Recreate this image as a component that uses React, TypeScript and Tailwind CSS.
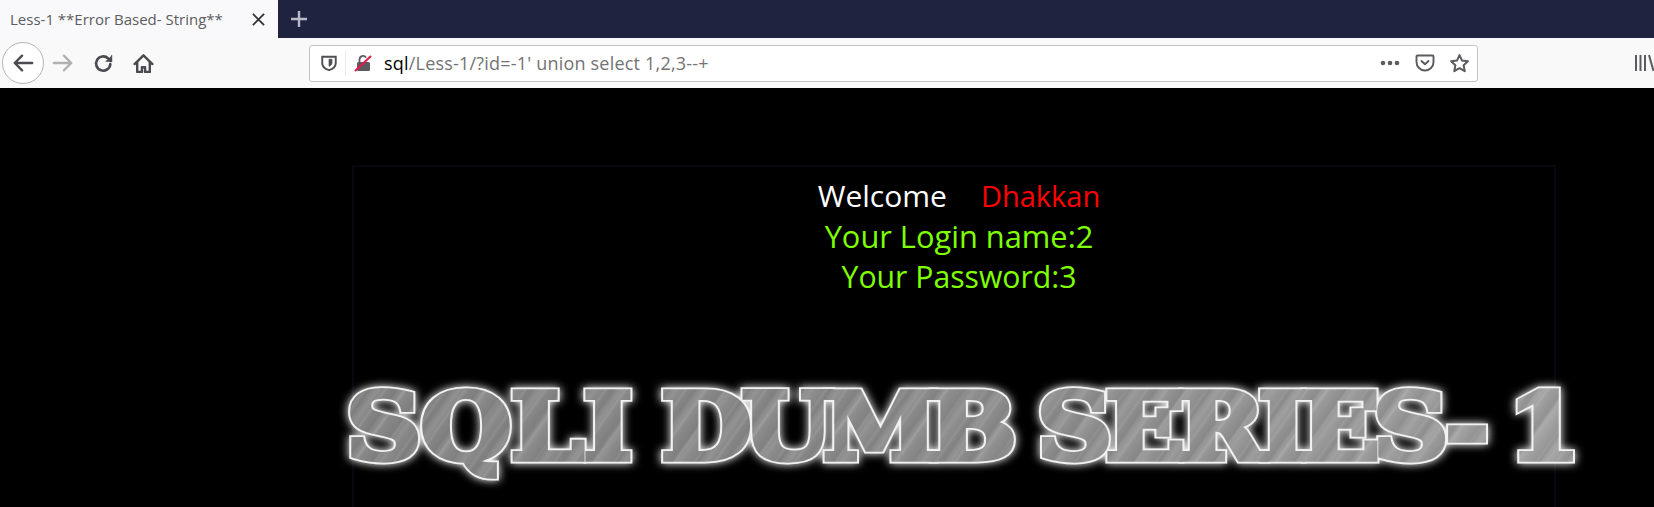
function BackIcon({ className }: { className: string }) {
  return (
    <svg viewBox="0 0 24 24" className={className} fill="none" stroke="currentColor" strokeWidth="2.6" strokeLinecap="round" strokeLinejoin="round">
      <path d="M22 12H3M11 4l-8 8 8 8" />
    </svg>
  );
}

function ToolbarLeft() {
  return (
    <div className="flex items-center w-[309px] shrink-0 h-full relative">
      <div className="w-[42px] h-[42px] ml-[2px] rounded-full bg-white border border-[#b5b5b5] flex items-center justify-center text-[#4a4a4f]">
        <BackIcon className="w-[22px] h-[22px]" />
      </div>
      <div className="ml-[8px] text-[#b1b1b3]">
        <BackIcon className="w-[22px] h-[22px] rotate-180" />
      </div>
      <svg viewBox="0 0 20 20" className="ml-[19px] w-[21px] h-[21px] text-[#4a4a4f]" fill="none" stroke="currentColor" strokeWidth="2.5" strokeLinecap="round" strokeLinejoin="round">
        <path d="M16.5 10.5a6.8 6.8 0 1 1-2-5.3L17 7.5" />
        <path d="M17.8 2.4v5.4h-5.4" fill="currentColor" strokeWidth="1" />
      </svg>
      <svg viewBox="0 0 20 20" className="ml-[19px] w-[21px] h-[21px] text-[#4a4a4f]" fill="none" stroke="currentColor" strokeWidth="2.3" strokeLinecap="round" strokeLinejoin="round">
        <path d="M1.5 10.5 10 2.2l8.5 8.3" />
        <path d="M4 9v9h4.5v-4.5h3V18H16V9" />
      </svg>
    </div>
  );
}

function UrlBar() {
  return (
    <div className="w-[1169px] h-[37px] shrink-0 bg-white border border-[#c4c4c6] rounded-[3px] flex items-center">
      <svg viewBox="0 0 16 16" className="ml-[10px] w-[18px] h-[18px] text-[#4f4f52]" fill="none" stroke="currentColor" strokeWidth="1.7">
        <path d="M2 2.5h12v5.5c0 3.4-2.6 5.4-6 6.4-3.4-1-6-3-6-6.4z" />
        <path d="M8 4.6h2.7v3.2c0 1.6-1.2 2.6-2.7 3.2z" fill="currentColor" strokeWidth="0.6" />
      </svg>
      <div className="ml-[7px] w-px h-[25px] bg-[#ececee]" />
      <svg viewBox="0 0 18 18" className="ml-[8px] w-[18px] h-[18px]">
        <path d="M5.5 8V5.5a3.5 3.5 0 0 1 6.5-1.8" fill="none" stroke="#5b5b5f" strokeWidth="1.8" />
        <rect x="3" y="8" width="13" height="9" rx="1.5" fill="#5b5b5f" />
        <path d="M1 17 17 2" stroke="#e8174a" strokeWidth="2" />
      </svg>
      <div className="ml-[12px] text-[18px] tracking-[0.2px] leading-none whitespace-nowrap text-[#737373]">
        <span className="text-black">sql</span>/Less-1/?id=-1' union select 1,2,3--+
      </div>
      <div className="ml-auto flex items-center text-[#5b5b5f]">
        <svg viewBox="0 0 20 6" className="w-[20px] h-[6px]" fill="currentColor">
          <circle cx="3" cy="3" r="2.3" />
          <circle cx="10" cy="3" r="2.3" />
          <circle cx="17" cy="3" r="2.3" />
        </svg>
        <svg viewBox="0 0 20 18" className="ml-[15px] w-[20px] h-[18px]" fill="none" stroke="currentColor" strokeWidth="1.9" strokeLinecap="round" strokeLinejoin="round">
          <path d="M2.5 1.5h15a1 1 0 0 1 1 1v5.5a8.5 8.5 0 0 1-17 0V2.5a1 1 0 0 1 1-1z" />
          <path d="m6.5 7 3.5 3.2L13.5 7" />
        </svg>
        <svg viewBox="0 0 20 20" className="ml-[14px] mr-[7px] w-[21px] h-[21px]" fill="none" stroke="currentColor" strokeWidth="1.9" strokeLinejoin="round">
          <path d="m10 2 2.4 5.2 5.6.7-4.1 3.8 1.1 5.6-5-2.8-5 2.8 1.1-5.6L2 7.9l5.6-.7z" />
        </svg>
      </div>
    </div>
  );
}

function TitleWords() {
  return (
    <>
      <span className="tracking-[-0.5px]">SQLI</span>{" "}
      <span className="tracking-[-9.5px]">DUMB</span>{" "}
      <span>SERIES-</span> <span className="ml-[-4px]">1</span>
    </>
  );
}

export default function App() {
  return (
    <div className="w-[1654px] h-[507px] overflow-hidden bg-black flex flex-col font-['Open_Sans','Noto_Sans',sans-serif]">
      <div className="h-[38px] bg-[#202340] flex items-center shrink-0">
        <div className="w-[278px] h-full bg-[#f9f9fb] flex items-center pl-[10px] pr-[13px]">
          <span className="text-[15px] text-[#5c5c61] whitespace-nowrap">Less-1 **Error Based- String**</span>
          <svg viewBox="0 0 14 14" className="ml-auto w-[13px] h-[13px] text-[#333]" fill="none" stroke="currentColor" strokeWidth="2">
            <path d="m1 1 12 12M13 1 1 13" />
          </svg>
        </div>
        <svg viewBox="0 0 18 18" className="ml-[12px] w-[18px] h-[18px] text-[#b9bac8]" fill="none" stroke="currentColor" strokeWidth="2.4">
          <path d="M9 1v16M1 9h16" />
        </svg>
      </div>
      <div className="h-[50px] bg-[#f9f9fa] flex items-center shrink-0">
        <ToolbarLeft />
        <UrlBar />
        <div className="ml-auto w-[20px] h-[18px] overflow-hidden text-[#5b5b5f]">
          <svg viewBox="0 0 20 18" className="w-[20px] h-[18px]" fill="none" stroke="currentColor" strokeWidth="2">
            <path d="M2 1v16M6.5 1v16M11 1v16M15 1l4.5 16" />
          </svg>
        </div>
      </div>
      <div className="flex-1 pt-[77px] pl-[352px]">
        <div className="w-[1204px] h-[400px] border-x-2 border-t-2 border-[#07070f] pt-[9px]">
          <div className="pl-[10px] text-center leading-[40px]">
            <div className="text-white text-[30px]">
              Welcome<span className="ml-[34px] text-[#ff0000] text-[29px]">Dhakkan</span>
            </div>
            <div className="text-[#7fff00] text-[30.8px]">Your Login name:2</div>
            <div className="text-[#7fff00] text-[30.2px] pt-px">Your Password:3</div>
          </div>
          <div className="mt-[82px] ml-[-14px] w-[1240px] flex justify-center">
            <div className="relative whitespace-nowrap font-['DejaVu_Serif',serif] font-bold text-[104px] leading-[96px] tracking-[-6.5px] scale-y-[0.88] blur-[0.6px]">
              <div className="text-[#f2f2f2] [-webkit-text-stroke:10px_#f2f2f2] drop-shadow-[0_0_5px_#ffffff]">
                <TitleWords />
              </div>
              <div className="absolute inset-x-0 top-0 pb-[30px] text-transparent bg-clip-text bg-[repeating-linear-gradient(122deg,rgba(70,70,70,0.16)_0px,rgba(70,70,70,0)_3px,rgba(255,255,255,0.07)_7px,rgba(70,70,70,0)_11px,rgba(70,70,70,0.16)_23px),repeating-linear-gradient(122deg,rgba(255,255,255,0)_0px,rgba(255,255,255,0.1)_2px,rgba(255,255,255,0)_5px,rgba(255,255,255,0)_17px),linear-gradient(90deg,#888888,#8e8e8e_50%,#a2a2a2_100%)] [-webkit-text-stroke:6px_transparent]">
                <TitleWords />
              </div>
            </div>
          </div>
        </div>
      </div>
    </div>
  );
}
